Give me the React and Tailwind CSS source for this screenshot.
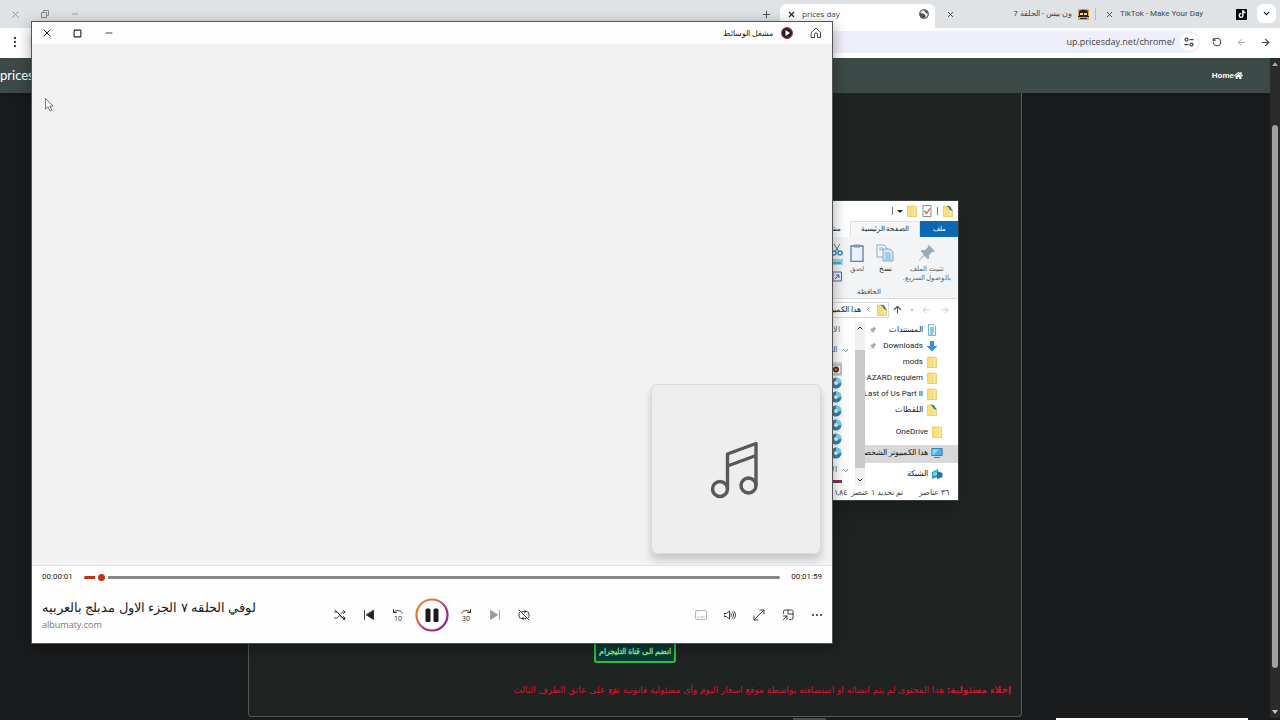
import React from 'react';
import { X, Minus, Square, Plus, MoreVertical, ChevronDown, ChevronUp, RotateCcw, ArrowLeft, ArrowRight, ArrowUp, ChevronLeft } from 'lucide-react';
import { FaHome, FaTiktok } from 'react-icons/fa';

const places = [
  { label: 'المستندات', icon: 'doc', pinned: true },
  { label: 'Downloads', icon: 'download', pinned: true },
  { label: 'mods', icon: 'folder' },
  { label: 'AZARD requiem', icon: 'folder' },
  { label: 'Last of Us Part II', icon: 'folder' },
  { label: 'اللقطات', icon: 'shortcut' },
];

const roots = [
  { label: 'OneDrive', icon: 'folder' },
  { label: 'هذا الكمبيوتر الشخصي', icon: 'pc', active: true },
  { label: 'الشبكة', icon: 'network' },
];

function FileIcon({ type }) {
  if (type === 'doc') {
    return (
      <svg className="size-3 shrink-0" viewBox="0 0 12 12">
        <path d="M2.5.5h5l2 2v9h-7z" fill="#e8f4fa" stroke="#6b9db8" strokeWidth=".8" />
        <path d="M4 4h4M4 6h4M4 8h4M4 10h3" stroke="#2f8fc0" strokeWidth=".9" />
      </svg>
    );
  }
  if (type === 'download') {
    return (
      <svg className="size-3 shrink-0" viewBox="0 0 12 12">
        <path d="M4 1h4v5h3.500L6 11.500.5 6H4z" fill="#3b8fdc" />
      </svg>
    );
  }
  if (type === 'pc') {
    return (
      <svg className="size-3 shrink-0" viewBox="0 0 12 12">
        <path d="M.8 1.500h10.400v7H.8z" fill="#45b5e8" stroke="#2d6f9c" strokeWidth=".8" />
        <path d="M1.500 2.200h6L3 8H1.500z" fill="#8ad7f6" />
        <path d="M3 10.500h6" stroke="#55819d" />
      </svg>
    );
  }
  if (type === 'network') {
    return (
      <svg className="size-3 shrink-0" viewBox="0 0 12 12">
        <path d="M1 4l6-3v8l-6 2z" fill="#2e9ed0" />
        <path d="M6 3l5.500 2v4L6 11z" fill="#2177ac" />
        <path d="M2 5l4-2v4L2 8z" fill="#7cd0ee" />
      </svg>
    );
  }
  return (
    <svg className="size-3 shrink-0" viewBox="0 0 12 12">
      <path d="M1.500 1h8l1 1v9.500h-9z" fill="#f7df7d" stroke="#e0c25a" strokeWidth=".7" />
      <path d="M8.500 2v9" stroke="#fff0ae" />
      {type === 'shortcut' && (
        <>
          <path d="M5 0h4l3 3v3H8z" fill="#fff" />
          <path d="M5 1l3 .5 1 2 1.500 2-2.500-.5L7 3z" fill="#3e7a68" stroke="#3e7a68" strokeWidth=".6" />
        </>
      )}
    </svg>
  );
}

function Pin({ className }) {
  return (
    <svg className={className} viewBox="0 0 20 20">
      <path d="M12 1l7 7-2 1-1-.5-4 4 .5 3-1.500 1.500-4-4L2 18l-1 1 .5-1.500L6.500 12l-3.500-4 1.500-1.500 3 .5 4-4-.5-1z" fill="#9aaabd" />
    </svg>
  );
}

function DiscIcon() {
  return (
    <svg className="size-3" viewBox="0 0 12 12">
      <circle cx="6" cy="6" r="5.500" fill="#2f86bd" />
      <path d="M6 .5A5.500 5.500 0 0 1 11.500 6L8 6.500A2 2 0 0 0 6 4z" fill="#7fd3ee" />
      <circle cx="6" cy="6" r="2" fill="#e9f6fb" />
    </svg>
  );
}

function CaptureIcon() {
  return (
    <svg className="size-3" viewBox="0 0 12 12">
      <path d="M1 2h10v9H1z" fill="#f2f2f2" stroke="#8a8a8a" strokeWidth=".8" />
      <circle cx="6" cy="6.500" r="3" fill="#5a2d22" />
      <circle cx="6" cy="6.500" r="1.300" fill="#e06a3a" />
    </svg>
  );
}

function Browser() {
  return (
    <div className="flex h-full flex-col bg-[#1a1b1c]">
      {/* Tab strip */}
      <header className="flex h-7 shrink-0 items-end bg-[#dfe3e6] font-[Roboto,'Noto_Sans',sans-serif] text-[8px] text-[#45484c]">
        <div className="flex h-7 items-center text-[#8c8fa3]">
          <button aria-label="Close browser" className="flex w-[30px] justify-center"><X size={11} strokeWidth={2} /></button>
          <button aria-label="Restore browser" className="flex w-[30px] justify-center">
            <svg className="size-2" viewBox="0 0 8 8" fill="none" stroke="#85888f">
              <path d="M.5 2.500h5v5h-5zM2.500 2V.5h5v5H6" />
            </svg>
          </button>
          <button aria-label="Minimize browser" className="flex w-[30px] justify-center"><Minus size={10} /></button>
        </div>
        <button aria-label="New tab" className="ml-auto flex h-7 w-[27px] items-center justify-center"><Plus size={11} /></button>
        <div className="flex h-6 w-[155px] items-center rounded-t-md bg-white px-[6px] pb-1">
          <button aria-label="Close tab" className="ml-[1px]"><X size={9} strokeWidth={3} color="#222" /></button>
          <span className="ml-[6px] font-['Open_Sans',sans-serif]">prices day</span>
          <svg className="ml-auto size-[10px]" viewBox="0 0 20 20">
            <circle cx="10" cy="10" r="8.500" fill="#fff" stroke="#4b4e52" strokeWidth="2.400" />
            <path d="M2 8c4 0 6 2 8 2 3 0 1 4 4 4l-4 5C5 19 1 14 2 8zM9 2c1 3 3 2 4 5s3 1 5 3c0-5-4-8-9-8z" fill="#4b4e52" />
          </svg>
        </div>
        <div className="flex h-7 w-[160px] items-center pl-[11px]">
          <button aria-label="Close tab"><X size={9} strokeWidth={2.500} /></button>
          <span dir="rtl" className="ml-auto">ون بيس - الحلقة 7</span>
          <svg className="mr-[6px] ml-[6px] size-[11px]" viewBox="0 0 11 11">
            <path d="M0 0h11v11H0z" fill="#d9a441" />
            <path d="M1 3c0-3 9-3 9 0v5H1z" fill="#2b2320" />
            <path d="M2 4h3v2H2zM6 4h3v2H6z" fill="#f4d68f" />
            <path d="M0 7.500h11M2 9.500h7" stroke="#33221a" />
          </svg>
        </div>
        <div className="mb-2 h-3 w-px bg-[#b5b9bd]" />
        <div className="flex h-7 w-[160px] items-center px-[9px]">
          <button aria-label="Close tab"><X size={9} strokeWidth={2.500} /></button>
          <span className="ml-[6px]">TikTok - Make Your Day</span>
          <span className="ml-auto flex size-[11px] items-center justify-center bg-black text-white"><FaTiktok size={8} /></span>
        </div>
        <button aria-label="Search tabs" className="mr-1 mb-[5px] ml-[1px] flex size-[19px] items-center justify-center rounded-md bg-white text-black">
          <ChevronDown size={9} strokeWidth={3} />
        </button>
      </header>

      {/* Address bar */}
      <div className="flex h-[30px] shrink-0 items-center bg-white pb-[2px] text-[#3f4246]">
        <button aria-label="Menu" className="flex w-[29px] justify-center"><MoreVertical size={14} strokeWidth={2} /></button>
        <div className="flex h-[22px] flex-1 items-center rounded-full bg-[#eeeffb] pr-[2px]">
          <input aria-label="Address" defaultValue="up.pricesday.net/chrome/" className="min-w-0 flex-1 bg-transparent text-right text-[9px] text-[#3c3f44] outline-none" />
          <span className="ml-[5px] flex size-[18px] items-center justify-center rounded-full bg-white">
            <svg className="size-[10px]" viewBox="0 0 20 20" fill="none" stroke="#3f4246" strokeWidth="2.500">
              <circle cx="5" cy="5" r="3" /><path d="M11 5h8M1 15h8" /><circle cx="15" cy="15" r="3" />
            </svg>
          </span>
        </div>
        <button aria-label="Reload" className="ml-[5px] flex w-6 justify-center"><RotateCcw size={10} strokeWidth={2.500} /></button>
        <button aria-label="Back" className="flex w-6 justify-center text-[#a5a8ac]"><ArrowLeft size={11} /></button>
        <button aria-label="Forward" className="mr-[3px] flex w-6 justify-center"><ArrowRight size={11} strokeWidth={2.500} /></button>
      </div>

      {/* Web page */}
      <div className="flex min-h-0 flex-1">
        <div className="flex min-w-0 flex-1 flex-col">
          <nav className="flex h-[35px] shrink-0 items-center justify-between bg-[#3b4a47] pr-[27px] text-white shadow-md">
            <a href="#" className="font-[Lato,sans-serif] text-[13px]">prices day</a>
            <a href="#" className="flex items-center font-['Liberation_Sans',sans-serif] text-[8px] font-bold">Home<FaHome size={9} /></a>
          </nav>
          <main className="mx-auto mb-px flex w-full max-w-[774px] flex-1 flex-col justify-end rounded-b border border-t-0 border-[#555756] bg-[#1f2423] px-[10px] pb-[19px]">
            <a href="#" dir="rtl" className="mx-auto flex h-[26px] w-[82px] items-center justify-center rounded-[3px] border-2 border-[#2bc23c] bg-[#093a35] pt-[2px] text-[8px] font-bold whitespace-nowrap text-[#8ff09a]">
              انضم الى قناة التليجرام
            </a>
            <p dir="rtl" className="mt-5 font-['DejaVu_Sans',sans-serif] text-[9px] leading-[14px] whitespace-nowrap text-[#d3142f]">
              <strong>إخلاء مسئولية:</strong> هذا المحتوى لم يتم انشائه او استضافته بواسطة موقع اسعار اليوم وأى مسئولية قانونية تقع على عاتق الطرف الثالث
            </p>
          </main>
        </div>
        <div className="flex w-[10px] flex-col items-center bg-[#2b2b2c] py-1">
          <span className="size-0 border-x-[3px] border-b-4 border-x-transparent border-b-[#a5a5a5]" />
          <span className="mt-[59px] mb-[42px] w-[6px] flex-1 rounded-full bg-[#a0a0a0]" />
          <span className="size-0 border-x-[3px] border-t-4 border-x-transparent border-t-[#c5c5c5]" />
        </div>
      </div>
      <footer className="flex h-[2px] shrink-0 justify-end bg-[#1a1b1c]">
        <span className="mr-[230px] w-[33px] bg-[#4b4c4d]" />
        <span className="mr-8 w-[192px] bg-white" />
      </footer>
    </div>
  );
}

function Explorer() {
  return (
    <section dir="rtl" aria-label="File Explorer" className="absolute top-[200px] left-[659px] flex h-[301px] w-[300px] flex-col border border-[#3a3d3d] bg-white font-[Roboto,'Noto_Sans',sans-serif] text-[8px] text-[#222] shadow-xl">
      <div className="flex h-5 shrink-0 items-center gap-[3px] pr-1">
        <FileIcon type="shortcut" />
        <span className="mx-[1px] h-2 w-px bg-[#777]" />
        <svg className="size-3" viewBox="0 0 12 12">
          <path d="M2 .5h8v11H2z" fill="#fff" stroke="#8b8b94" />
          <path d="M3.500 6l2 2.500L9 3.500" fill="none" stroke="#d05a40" strokeWidth="1.300" />
        </svg>
        <FileIcon type="folder" />
        <span className="size-0 border-x-[3px] border-t-[3px] border-x-transparent border-t-[#222]" />
        <span className="mx-[1px] h-2 w-px bg-[#777]" />
      </div>
      <div className="flex h-4 shrink-0 text-[7px]">
        <button className="w-[38px] bg-[#0d68b4] text-white">ملف</button>
        <button className="w-[70px] border-x border-t border-[#dedfe0] bg-[#f5f6f7]">الصفحة الرئيسية</button>
        <button className="px-[9px]">مشاركة</button>
      </div>
      <div className="h-[62px] shrink-0 border-b border-[#dadbdc] bg-[#f3f4f5] text-[#666]">
        <div className="flex h-[50px] pt-[7px] text-[7px] leading-[9px]">
          <button className="mr-[3px] flex w-[56px] flex-col items-center gap-[3px]">
            <Pin className="size-[18px] shrink-0" />
            <span className="whitespace-nowrap">تثبيت الملف<br />بالوصول السريع.</span>
          </button>
          <button className="flex w-7 flex-col items-center gap-[3px] text-[#222]">
            <svg className="size-[18px] shrink-0" viewBox="0 0 18 18" stroke="#6c94b0" strokeWidth=".8">
              <path d="M1 1h7l3 3v9H1z" fill="#f4fafd" />
              <path d="M7 5h7l3 3v9H7z" fill="#d5e8f5" />
              <path d="M9 9h5M9 11h6M9 13h6M9 15h6M3 4h4M3 6h4" stroke="#5aa0cc" />
            </svg>
            نسخ
          </button>
          <button className="flex w-7 flex-col items-center gap-[3px]">
            <svg className="size-[18px] shrink-0" viewBox="0 0 18 18">
              <path d="M3 2h12v15.500H3z" fill="#e9f1fb" stroke="#6478a6" strokeWidth="1.300" />
              <path d="M6 .5h6v3H6z" fill="#8592aa" />
            </svg>
            لصق
          </button>
          <svg className="h-[38px] w-3 shrink-0" viewBox="0 0 12 38">
            <path d="M3 0l5 8M9 0L4 8" stroke="#60727f" fill="none" />
            <circle cx="3" cy="9" r="2" fill="none" stroke="#258ec2" strokeWidth="1.500" /><circle cx="9" cy="9" r="2" fill="none" stroke="#258ec2" strokeWidth="1.500" />
            <path d="M0 15h12v6H0z" fill="#9ed3ef" /><path d="M2 19h8" stroke="#276f9b" />
            <path d="M2 28h8.500v9H2z" fill="#e6edfb" stroke="#5568a6" /><path d="M4 35l4-4M5 31h3v3" stroke="#4558a0" fill="none" />
          </svg>
        </div>
        <div className="mr-[77px] text-[7px] leading-[10px] text-[#444]">الحافظة</div>
      </div>
      <div className="flex h-[23px] shrink-0 items-center pb-[2px] text-[#555]">
        <button aria-label="Back" className="mr-2 text-[#c2c3c4]"><ArrowRight size={10} /></button>
        <button aria-label="Forward" className="mr-[9px] text-[#c2c3c4]"><ArrowLeft size={10} /></button>
        <span className="mx-2 size-[2px] bg-[#bbb]" />
        <button aria-label="Up"><ArrowUp size={11} strokeWidth={2.500} /></button>
        <div className="mr-[3px] flex h-4 flex-1 items-center gap-1 border border-[#d8d8d8] text-[#222]">
          <FileIcon type="shortcut" />
          <ChevronLeft size={7} />
          هذا الكمبيوتر الشخصي
        </div>
      </div>
      <div className="flex min-h-0 flex-1">
        <nav className="flex w-[93px] shrink-0 flex-col overflow-hidden">
          {places.map((p) => (
            <a key={p.label} href="#" className="flex h-4 shrink-0 items-center gap-[3px] pr-5">
              <FileIcon type={p.icon} />
              <span dir="auto" className="flex shrink-0 whitespace-nowrap">{p.label}</span>
              {p.pinned && <Pin className="mr-auto ml-1 size-2 shrink-0" />}
            </a>
          ))}
          <div className="mt-[3px]">
            {roots.map((r) => (
              <a key={r.label} href="#" className={`flex h-[21px] items-center pr-[15px] ${r.active ? 'bg-linear-to-b from-transparent from-[3px] via-[#d9d9d9] via-[3px] to-[#d9d9d9]' : ''}`}>
                <FileIcon type={r.icon} />
                <span className="mr-[3px] shrink-0 whitespace-nowrap">{r.label}</span>
              </a>
            ))}
          </div>
        </nav>
        <div className="flex w-[10px] shrink-0 flex-col items-center bg-[#f0f0f0] py-[2px]">
          <ChevronUp size={8} strokeWidth={3} />
          <span className="my-[8px] mt-[18px] w-full flex-1 bg-[#c9c9c9]" />
          <ChevronDown size={8} strokeWidth={3} />
        </div>
        <div className="flex min-w-0 flex-1 flex-col items-start pr-[13px]">
          <span className="mr-[2px] h-4 leading-4 text-[#666]">الاسم</span>
          <span className="-mr-2 flex h-6 items-center gap-1 whitespace-nowrap text-[#4d5a80]"><ChevronDown size={9} />المجلدات</span>
          <span className="flex h-[14px] items-center bg-[#d9d9d9]"><CaptureIcon /></span>
          {[0, 1, 2, 3, 4, 5].map((n) => (
            <span key={n} className="flex h-[14px] items-center"><DiscIcon /></span>
          ))}
          <span className="-mr-2 flex h-5 items-center gap-1 whitespace-nowrap text-[#4d5a80]"><ChevronDown size={9} />الأجهزة</span>
          <span className="h-[3px] w-3 shrink-0 bg-[#8b2f50]" />
        </div>
      </div>
      <div className="flex h-[14px] shrink-0 items-center gap-4 pr-[9px] text-[#444]">
        <span>٣٦ عناصر</span>
        <span className="whitespace-nowrap">تم تحديد ١ عنصر&nbsp; ١,٨٤ ميغابايت</span>
      </div>
    </section>
  );
}

function ControlIcon({ children, className = 'size-3' }) {
  return (
    <svg className={className} viewBox="0 0 24 24" fill="none" stroke="currentColor" strokeWidth="1.700" strokeLinecap="round" strokeLinejoin="round">{children}</svg>
  );
}

function MediaPlayer() {
  const btn = 'flex w-[29px] h-8 items-center justify-center';
  return (
    <section aria-label="Media player" className="absolute top-[21px] left-[31px] flex h-[623px] w-[802px] flex-col border border-[#555] bg-[#fdfdfd] text-[#222] shadow-[0_4px_14px_rgba(0,0,0,0.35)]">
      <div className="flex h-[22px] shrink-0 items-center pr-px">
        <button aria-label="Close" className="flex w-[30px] justify-center"><X size={12} /></button>
        <button aria-label="Maximize" className="flex w-[31px] justify-center"><Square size={9} strokeWidth={3} /></button>
        <button aria-label="Minimize" className="flex w-[31px] justify-center"><Minus size={10} /></button>
        <span dir="rtl" className="ml-auto text-[8px]">مشغل الوسائط</span>
        <svg className="ml-2 size-3" viewBox="0 0 24 24">
          <circle cx="12" cy="12" r="11" fill="#2a1c2c" stroke="#8a4a4c" strokeWidth="2" />
          <path d="M9 6l9 6-9 6z" fill="#fff" />
        </svg>
        <button aria-label="Home" className="ml-[7px] flex w-[31px] justify-center">
          <ControlIcon><path d="M3 10.500L12 2l9 8.500V21h-6v-6a3 3 0 0 0-6 0v6H3z" /></ControlIcon>
        </button>
      </div>

      <div className="flex flex-1 items-end justify-end bg-[#f2f2f2] pr-[11px] pb-[11px]">
        <div className="flex size-[170px] items-center justify-center rounded-md border border-[#d9d9d9] bg-[#eee] shadow-[0_6px_8px_rgba(0,0,0,0.18)]">
          <svg className="h-[58px] w-12 overflow-visible" viewBox="1.500 -1 48 58" fill="none" stroke="#595959" strokeWidth="3.400" strokeLinejoin="round">
            <circle cx="9.500" cy="48" r="7.500" />
            <circle cx="38" cy="44.500" r="7.500" />
            <path d="M17 48V13l28.500-10.500v42M17 25l28.500-10.500" />
          </svg>
        </div>
      </div>

      <div className="h-[78px] shrink-0 border-t border-[#e3e3e3]">
        <div className="flex h-[22px] items-center gap-[11px] px-[10px] font-[Roboto,sans-serif] text-[8px]">
          <span>00:00:01</span>
          <input
            type="range"
            aria-label="Seek"
            min="0"
            max="119"
            defaultValue="2"
            className="h-[3px] min-w-0 flex-1 appearance-none rounded-full bg-linear-to-r from-[#bf3415] from-[16px] to-[#868686] to-[16px] [&::-webkit-slider-thumb]:size-[13px] [&::-webkit-slider-thumb]:appearance-none [&::-webkit-slider-thumb]:rounded-full [&::-webkit-slider-thumb]:border-3 [&::-webkit-slider-thumb]:border-[#fdfdfd] [&::-webkit-slider-thumb]:bg-[#bf3415]"
          />
          <span>00:01:59</span>
        </div>
        <div className="grid h-[54px] grid-cols-[1fr_auto_1fr] items-center">
          <div className="pl-[10px]">
            <h1 dir="rtl" className="w-max text-[13px] leading-5 whitespace-nowrap">لوفي الحلقه ٧ الجزء الاول مدبلج بالعربيه</h1>
            <p className="text-[9px] leading-4 text-[#777]">albumaty.com</p>
          </div>
          <div className="flex items-center">
            <button aria-label="Shuffle" className={btn}>
              <ControlIcon><path d="M1 6h4c6 0 7 12 13 12h4M1 18h4c2 0 4-2 5-4M14 9c1-2 3-3 5-3h3M19 3l3 3-3 3M19 15l3 3-3 3M2 2l20 20" /></ControlIcon>
            </button>
            <button aria-label="Previous" className={btn}>
              <ControlIcon><path d="M3 3v18" /><path d="M21 3v18L7 12z" fill="currentColor" /></ControlIcon>
            </button>
            <button aria-label="Back 10 seconds" className={btn}>
              <ControlIcon><path d="M3 1v6h6M3 7c5-6 14-5 18 1" /><text x="4" y="23" fontSize="14" stroke="none" fill="currentColor">10</text></ControlIcon>
            </button>
            <button aria-label="Pause" className="flex w-[39px] justify-center">
              <svg className="size-[34px]" viewBox="0 0 34 34">
                <defs>
                  <linearGradient id="ring" x1="0" y1="0" x2="1" y2="1">
                    <stop offset="0" stopColor="#ee8a2a" /><stop offset=".35" stopColor="#dc6b45" /><stop offset=".65" stopColor="#b52a80" /><stop offset="1" stopColor="#5b2494" />
                  </linearGradient>
                </defs>
                <circle cx="17" cy="17" r="15.500" fill="#fff" stroke="url(#ring)" strokeWidth="2.200" />
                <rect x="10.500" y="10.500" width="5" height="13.500" rx="1.500" fill="#1b1b1b" />
                <rect x="18.500" y="10.500" width="5" height="13.500" rx="1.500" fill="#1b1b1b" />
              </svg>
            </button>
            <button aria-label="Forward 30 seconds" className={btn}>
              <ControlIcon><path d="M21 1v6h-6M21 7C16 1 7 2 3 8" /><text x="4" y="23" fontSize="14" stroke="none" fill="currentColor">30</text></ControlIcon>
            </button>
            <button aria-label="Next" className={`${btn} text-[#999]`}>
              <ControlIcon><path d="M21 3v18" /><path d="M3 3v18l14-9z" fill="currentColor" /></ControlIcon>
            </button>
            <button aria-label="Repeat off" className={btn}>
              <ControlIcon><path d="M8 5h9a5 5 0 0 1 5 5v4a5 5 0 0 1-1 3M13 2l3 3-3 3M16 19H7a5 5 0 0 1-5-5v-4a5 5 0 0 1 2-4M11 22l-3-3 3-3M2 2l20 20" /></ControlIcon>
            </button>
          </div>
          <div className="flex justify-end pr-px">
            <button aria-label="Subtitles" className={`${btn} text-[#aaa]`}>
              <ControlIcon><rect x="1" y="3" width="22" height="18" rx="3" /><path d="M5 16h3M11 16h8" /></ControlIcon>
            </button>
            <button aria-label="Volume" className={btn}>
              <ControlIcon><path d="M1 9h4l6-5v16l-6-5H1zM14 9c1 2 1 4 0 6M17 6c3 4 3 8 0 12M20 4c4 5 4 11 0 16" /></ControlIcon>
            </button>
            <button aria-label="Full screen" className={btn}>
              <ControlIcon><path d="M14 2h8v8M22 2L2 22M2 14v8h8" /></ControlIcon>
            </button>
            <button aria-label="Mini player" className={btn}>
              <ControlIcon><path d="M3 9V5a3 3 0 0 1 3-3h13a3 3 0 0 1 3 3v13a3 3 0 0 1-3 3h-4M12 2v8h10M3 14h7v7M10 14l-8 8" /></ControlIcon>
            </button>
            <button aria-label="More" className={btn}>
              <ControlIcon><g fill="currentColor" stroke="none"><circle cx="4" cy="12" r="2" /><circle cx="12" cy="12" r="2" /><circle cx="20" cy="12" r="2" /></g></ControlIcon>
            </button>
          </div>
        </div>
      </div>
    </section>
  );
}

export default function App() {
  return (
    <div dir="ltr" className="relative h-screen w-full overflow-hidden font-['Open_Sans','Noto_Sans',sans-serif]">
      <Browser />
      <Explorer />
      <MediaPlayer />
      <svg className="absolute top-[98px] left-[45px] h-[14px] w-[9px]" viewBox="0 0 9 14">
        <path d="M.5 .5v10.500l2.500-2.300 2 4.300 1.800-.8-2-4.200h3.400z" fill="#fff" stroke="#555" strokeWidth=".8" />
      </svg>
    </div>
  );
}
